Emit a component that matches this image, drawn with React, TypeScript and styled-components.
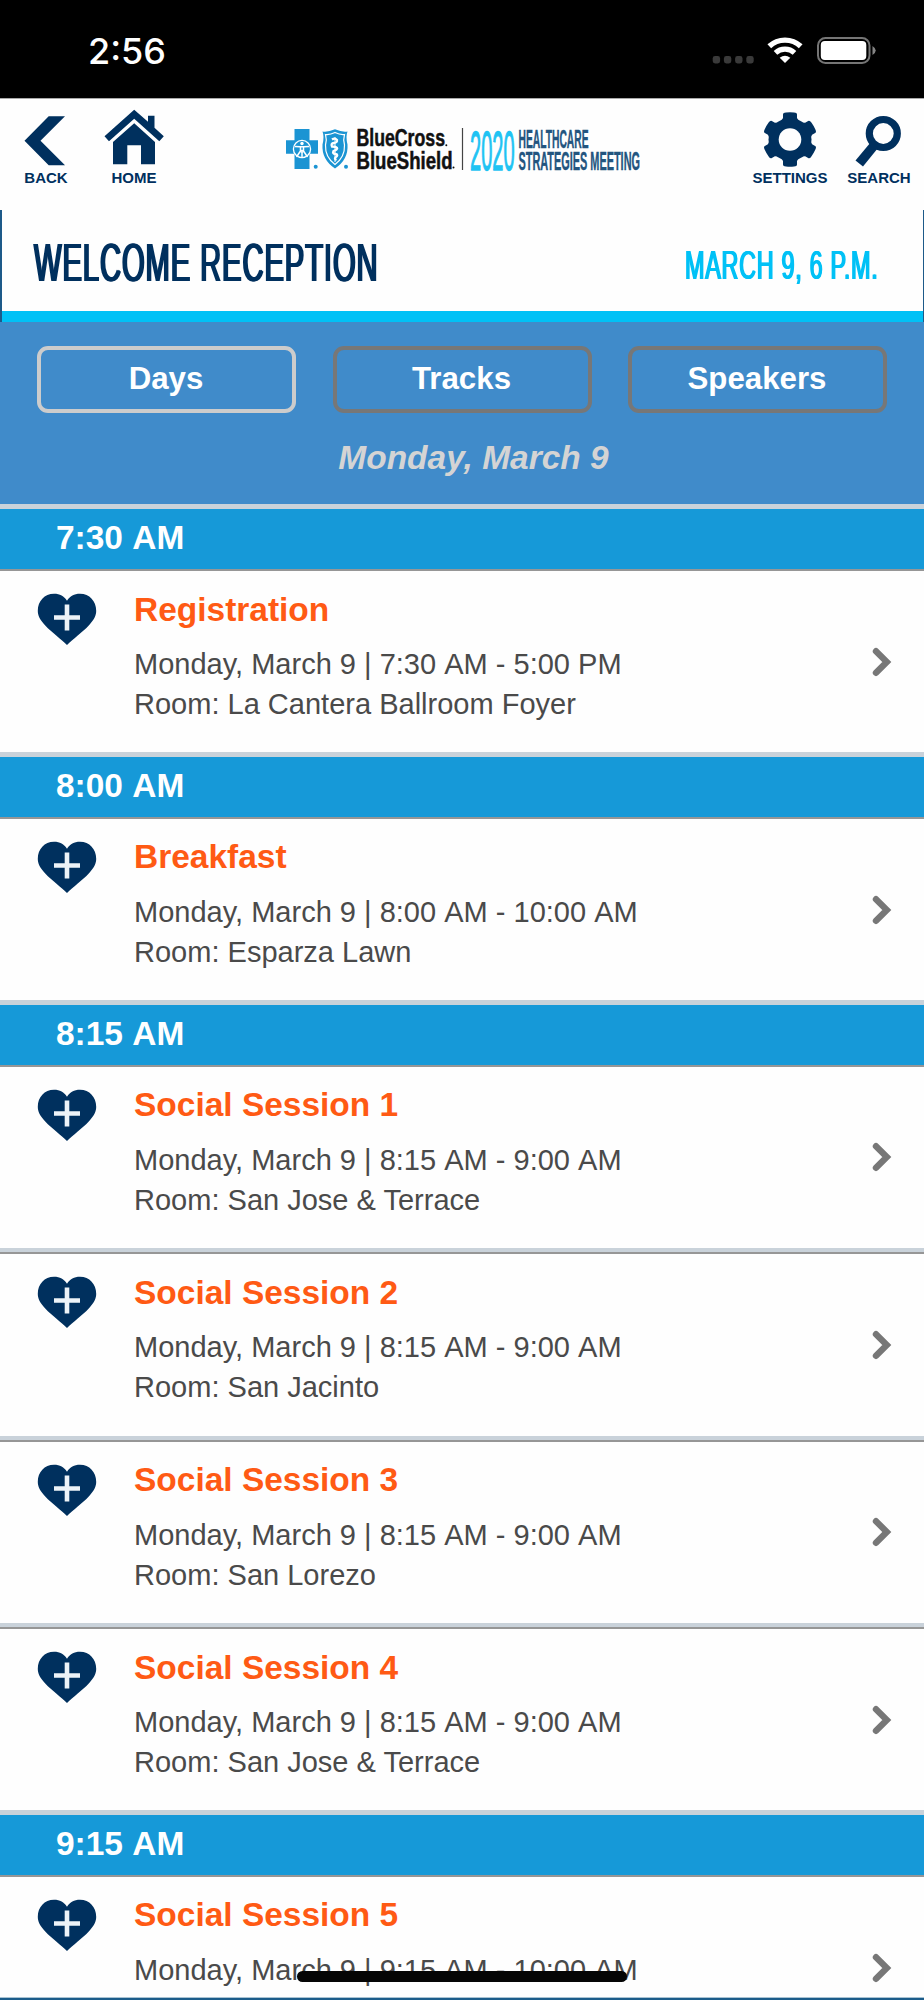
import React from "react";
import styled, { createGlobalStyle } from "styled-components";

const NAVY = "#00305e";

const GlobalStyle = createGlobalStyle`
  * { box-sizing: border-box; }
  body {
    margin: 0;
    background: #fff;
    font-family: "Liberation Sans", Arial, sans-serif;
    overflow: hidden;
  }
`;

const Screen = styled.div`
  position: relative;
  display: flex;
  flex-direction: column;
  width: 924px;
  height: 2000px;
  overflow: hidden;
  background: #fefefe;
`;

const StatusBar = styled.div`
  flex: none;
  display: flex;
  justify-content: space-between;
  height: 99px;
  padding: 30px 48px 0 88px;
  background: #000;
  border-bottom: 1px solid #a9a9a9;
`;

const Clock = styled.div`
  color: #fff;
  font: 500 36px/43px Inter, sans-serif;
`;

const StatusIcons = styled.svg`
  display: block;
  margin-top: 6px;
  width: 164px;
  height: 30px;
`;

const Header = styled.header`
  flex: none;
  display: flex;
  justify-content: space-between;
  height: 111px;
`;

const NavGroup = styled.div<{ $gap: number; $left?: number; $right?: number }>`
  display: flex;
  gap: ${(p) => p.$gap}px;
  padding: 9px ${(p) => p.$right ?? 0}px 0 ${(p) => p.$left ?? 0}px;
`;

const NavItem = styled.button<{ $width: number }>`
  display: flex;
  flex-direction: column;
  align-items: center;
  width: ${(p) => p.$width}px;
  height: 80px;
  padding: 0;
  border: 0;
  background: none;
  color: ${NAVY};
  font: bold 15px/16px "Liberation Sans", Arial, sans-serif;
  white-space: nowrap;
`;

const NavIcon = styled.svg`
  flex: none;
  display: block;
  width: 60px;
  height: 62px;
  fill: ${NAVY};
`;

const Logo = styled.svg`
  display: block;
  width: 364px;
  height: 50px;
  margin: 26px 0 0 11px;
  overflow: visible;
`;

const Banner = styled.section`
  flex: none;
  display: flex;
  justify-content: space-between;
  height: 112px;
  padding: 0 43px 0 32px;
  border-left: 2px solid #1d5a89;
  border-right: 1px solid #1d5a89;
  background: linear-gradient(#fefefe 101.5px, #00c1f6 101.5px);
`;

const BannerSlot = styled.div<{ $width: number; $top: number }>`
  width: ${(p) => p.$width}px;
  padding-top: ${(p) => p.$top}px;
`;

/* Condensed lettering: squeezed horizontally, with the stems thickened sideways. */
const BannerText = styled.div<{
  $size: number;
  $scale: number;
  $color: string;
  $stem: number;
  $spacing: number;
}>`
  width: max-content;
  height: 60px;
  color: ${(p) => p.$color};
  font: 400 ${(p) => p.$size}px/60px "Liberation Sans", Arial, sans-serif;
  letter-spacing: ${(p) => p.$spacing}px;
  white-space: nowrap;
  transform: scaleX(${(p) => p.$scale});
  transform-origin: left center;
  text-shadow: ${(p) => p.$stem}px 0 ${(p) => p.$color}, -${(p) => p.$stem}px 0 ${(p) => p.$color};
`;

const FilterPanel = styled.section`
  flex: none;
  height: 187px;
  padding: 24px 37px 0;
  background: #408bca;
  border-bottom: 5px solid #c9d2da;
`;

const Tabs = styled.div`
  display: grid;
  grid-template-columns: repeat(3, 1fr);
  gap: 36.5px;
`;

const Tab = styled.button<{ $active?: boolean }>`
  height: 67px;
  padding: 0 1px 2px 0;
  border: 4.4px solid ${(p) => (p.$active ? "#cccccc" : "#777777")};
  border-radius: 11px;
  background: none;
  color: #fff;
  font: bold 31.25px/50px "Liberation Sans", Arial, sans-serif;
`;

const DayTitle = styled.h2`
  margin: 25px -23px 0 0;
  color: #d4d4d4;
  font: italic bold 33.48px/40px "Liberation Sans", Arial, sans-serif;
  text-align: center;
`;

const Agenda = styled.main`
  flex: 1;
  min-height: 0;
  overflow: hidden;
`;

const TimeBand = styled.h3`
  height: 60.26px;
  margin: 0;
  padding-left: 56px;
  background: #1699d8;
  color: #fff;
  font: bold 33.48px/57.4px "Liberation Sans", Arial, sans-serif;
  font-kerning: none;
`;

const SessionRow = styled.article<{ $last: boolean }>`
  display: flex;
  align-items: flex-start;
  height: 187.5px;
  padding: 20px 32px 0 36px;
  border-top: 2px solid #969696;
  border-bottom: ${(p) => (p.$last ? 5 : 4)}px solid #c9d2da;
  background: #fefefe;
`;

const Heart = styled.svg`
  flex: none;
  width: 62px;
  height: 56px;
`;

const Details = styled.div`
  flex: 1;
  margin-left: 36px;
`;

const SessionTitle = styled.h4`
  margin: -1.6px 0 0;
  color: #ff5a14;
  font: bold 33.48px/40px "Liberation Sans", Arial, sans-serif;
`;

const SessionInfo = styled.p`
  margin: 14.4px 0 0;
  color: #4a4a4a;
  font: 29.02px/40.17px "Liberation Sans", Arial, sans-serif;
`;

const SessionHours = styled.span`
  font-kerning: none;
`;

const Chevron = styled.svg`
  flex: none;
  width: 20px;
  height: 30px;
  margin-top: 55.5px;
`;

const BottomEdge = styled.div`
  flex: none;
  height: 3px;
  background: #1b5c8a;
  border-top: 1px solid #a9c3d3;
`;

const HomeIndicator = styled.div`
  position: absolute;
  left: 297px;
  top: 1971px;
  width: 330px;
  height: 11px;
  border-radius: 6px;
  background: #050505;
`;

type Session = { title: string; time: string; room?: string };
type Slot = { label: string; sessions: Session[] };

const slots: Slot[] = [
  { label: "7:30 AM", sessions: [{ title: "Registration", time: "7:30 AM - 5:00 PM", room: "La Cantera Ballroom Foyer" }] },
  { label: "8:00 AM", sessions: [{ title: "Breakfast", time: "8:00 AM - 10:00 AM", room: "Esparza Lawn" }] },
  {
    label: "8:15 AM",
    sessions: [
      { title: "Social Session 1", time: "8:15 AM - 9:00 AM", room: "San Jose & Terrace" },
      { title: "Social Session 2", time: "8:15 AM - 9:00 AM", room: "San Jacinto" },
      { title: "Social Session 3", time: "8:15 AM - 9:00 AM", room: "San Lorezo" },
      { title: "Social Session 4", time: "8:15 AM - 9:00 AM", room: "San Jose & Terrace" },
    ],
  },
  { label: "9:15 AM", sessions: [{ title: "Social Session 5", time: "9:15 AM - 10:00 AM" }] },
];

const gearTeeth = [0, 60, 120, 180, 240, 300];

function BrandLogo() {
  return (
    <Logo viewBox="282 125 364 50" role="img" aria-label="BlueCross BlueShield 2020 Healthcare Strategies Meeting">
      <g fill="#1b94d3">
        <path d="M294.5 129h15v11.3h8.5v13.4h-8.5V169h-15v-15.3H286v-13.4h8.5z" />
        <path d="M322.5 131.5q5 1 12.500-2.200q7.500 3.200 12.500 2.200q-2 5 0 13q1 15-12.500 24q-13.500-9-12.500-24q2-8 0-13z" />
        <circle cx="315.700" cy="166.700" r="2" />
        <circle cx="346" cy="166.700" r="2" />
      </g>
      <g fill="none" stroke="#fff">
        <circle cx="302" cy="149" r="8.600" strokeWidth="1.300" />
        <path d="M295 146.500l5 .3h4l5-.3M300.500 146v5l-4 6M303.500 146v5l4 6M300.500 152l1.500-1.500 1.500 1.500M302 152v5" strokeWidth="1.500" />
        <circle cx="302" cy="143.500" r="1.700" fill="#fff" stroke="none" />
        <path d="M325.500 134.500q4.500.5 9.500-2q5 2.500 9.500 2q-1.500 5 0 10.500q.5 12-9.500 19.500q-10-7.500-9.500-19.500q1.500-5.500 0-10.500z" strokeWidth="1.200" />
        <path d="M332 139.500q3-2 5 .5q.5 2.500-3 3t-2 3.500q4 0 5 1.500t-3.500 3q-1.500 2.500 2 3t0 3.500q-1.500 1.500 1 2.500" strokeWidth="2.300" />
        <path d="M335 137v25" strokeWidth="1" />
      </g>
      <path d="M462.500 128v42" stroke="#444" strokeWidth="1.200" />
      <g fontFamily="Liberation Sans, Arial, sans-serif">
        <g fill="#111" stroke="#111" strokeWidth=".5" fontWeight="bold" fontSize="23.500">
          <text x="356.500" y="146.300" textLength="88.500" lengthAdjust="spacingAndGlyphs">BlueCross</text>
          <text x="356.500" y="169" textLength="96" lengthAdjust="spacingAndGlyphs">BlueShield</text>
          <circle cx="446.300" cy="145.300" r="1" stroke="none" />
          <circle cx="453.500" cy="167.500" r="1" stroke="none" />
        </g>
        <text x="470" y="169.500" fontSize="56" fill="#1fc3f3" stroke="#1fc3f3" strokeWidth="1.300" textLength="44.500" lengthAdjust="spacingAndGlyphs">2020</text>
        <g fill="#23557f" stroke="#23557f" strokeWidth=".4" fontWeight="bold" fontSize="25">
          <text x="518.500" y="147.500" textLength="70" lengthAdjust="spacingAndGlyphs">HEALTHCARE</text>
          <text x="518.500" y="170" textLength="121.500" lengthAdjust="spacingAndGlyphs">STRATEGIES MEETING</text>
        </g>
      </g>
    </Logo>
  );
}

function SessionItem({ session, last }: { session: Session; last: boolean }) {
  return (
    <SessionRow $last={last}>
      <Heart viewBox="0 0 62 56">
        <path
          fill={NAVY}
          d="M31 54C25 47.700 16.500 42.200 9 34.200C3.500 28.200 1.800 24.200 1.800 19.700C1.800 10.200 8.500 2.800 18 2.800C24 2.800 28 5.200 31 9.700C34 5.200 38 2.800 44 2.800C53.500 2.800 60.200 10.200 60.200 19.700C60.200 24.200 58.500 28.200 53 34.200C45.500 42.200 37 47.700 31 54Z"
        />
        <path d="M31 13.500v26M18 26.500h26" stroke="#edf3f8" strokeWidth="4.600" />
      </Heart>
      <Details>
        <SessionTitle>{session.title}</SessionTitle>
        <SessionInfo>
          Monday, March 9 | <SessionHours>{session.time}</SessionHours>
          {session.room && (
            <>
              <br />
              Room: {session.room}
            </>
          )}
        </SessionInfo>
      </Details>
      <Chevron viewBox="0 0 20 30">
        <path d="M4 4.200L14.800 15L4 25.800" fill="none" stroke="#777" strokeWidth="6.400" strokeLinecap="round" />
      </Chevron>
    </SessionRow>
  );
}

export default function App() {
  return (
    <Screen>
      <GlobalStyle />
      <StatusBar>
        <Clock>2:56</Clock>
        <StatusIcons viewBox="712 36 164 30">
          <g fill="#3a3a3a">
            {[712.7, 723.9, 735.1, 746.3].map((x) => (
              <rect key={x} x={x} y="56" width="7.400" height="7.400" rx="2.400" />
            ))}
          </g>
          <g fill="none" stroke="#fff">
            <path d="M769.300 46.300a23 23 0 0 1 31.400 0" strokeWidth="5.400" />
            <path d="M775.500 52.800a14 14 0 0 1 19 0" strokeWidth="5.200" />
          </g>
          <path d="M785 63l-5.300-5.300q5.300-3.800 10.600 0z" fill="#fff" />
          <rect x="818" y="38" width="51.500" height="25" rx="7.500" fill="none" stroke="#757575" strokeWidth="2" />
          <rect x="820.800" y="41" width="45.500" height="19" rx="4" fill="#fff" />
          <path d="M872.500 46q6.500 4.500 0 9z" fill="#858585" />
        </StatusIcons>
      </StatusBar>

      <Header>
        <NavGroup $gap={28} $left={16}>
          <NavItem $width={60}>
            <NavIcon viewBox="16 108 60 62">
              <path d="M48.700 116.300H65L40.500 140.700L65 165.200H48.700L24.500 140.700z" />
            </NavIcon>
            BACK
          </NavItem>
          <NavItem $width={60}>
            <NavIcon viewBox="104 108 60 62">
              <path d="M134.200 109.800L148 121.800V115.800H154.500V127.800L163.800 136.300L159.300 141.200L134.200 118.700L109 141.200L104.500 136.300z" />
              <path d="M134.200 123.300L155 142V164.300H141V145.300H127.300V164.300H113V142z" />
            </NavIcon>
            HOME
          </NavItem>
        </NavGroup>
        <BrandLogo />
        <NavGroup $gap={20} $right={14}>
          <NavItem $width={76}>
            <NavIcon viewBox="760 108 60 62">
              <mask id="gearHole">
                <rect x="760" y="108" width="60" height="62" fill="#fff" />
                <circle cx="790" cy="139.500" r="11.300" fill="#000" />
              </mask>
              <g mask="url(#gearHole)">
                <circle cx="790" cy="139.500" r="21.500" />
                {gearTeeth.map((angle) => (
                  <path
                    key={angle}
                    transform={`rotate(${angle} 790 139.500)`}
                    d="M780.500 122L783 118V114.500Q783 112.700 786 112.500Q790 112.100 794 112.500Q797 112.700 797 114.500V118L799.500 122z"
                  />
                ))}
              </g>
            </NavIcon>
            SETTINGS
          </NavItem>
          <NavItem $width={62}>
            <NavIcon viewBox="850 108 60 62">
              <circle cx="884.300" cy="133.500" r="14" fill="none" stroke={NAVY} strokeWidth="7.200" />
              <path d="M871.500 142.500L856.500 160.500L864 166.500L879 148z" />
            </NavIcon>
            SEARCH
          </NavItem>
        </NavGroup>
      </Header>

      <Banner>
        <BannerSlot $width={346} $top={22}>
          <BannerText $size={54} $scale={0.54} $color={NAVY} $stem={1.8} $spacing={1.7}>
            WELCOME RECEPTION
          </BannerText>
        </BannerSlot>
        <BannerSlot $width={195} $top={25}>
          <BannerText $size={40} $scale={0.585} $color="#00c1f6" $stem={1.2} $spacing={1.2}>
            MARCH 9, 6 P.M.
          </BannerText>
        </BannerSlot>
      </Banner>

      <FilterPanel>
        <Tabs>
          <Tab $active>Days</Tab>
          <Tab>Tracks</Tab>
          <Tab>Speakers</Tab>
        </Tabs>
        <DayTitle>Monday, March 9</DayTitle>
      </FilterPanel>

      <Agenda>
        {slots.map((slot) => (
          <React.Fragment key={slot.label}>
            <TimeBand>{slot.label}</TimeBand>
            {slot.sessions.map((session, i) => (
              <SessionItem key={session.title} session={session} last={i === slot.sessions.length - 1} />
            ))}
          </React.Fragment>
        ))}
      </Agenda>
      <BottomEdge />
      <HomeIndicator />
    </Screen>
  );
}
